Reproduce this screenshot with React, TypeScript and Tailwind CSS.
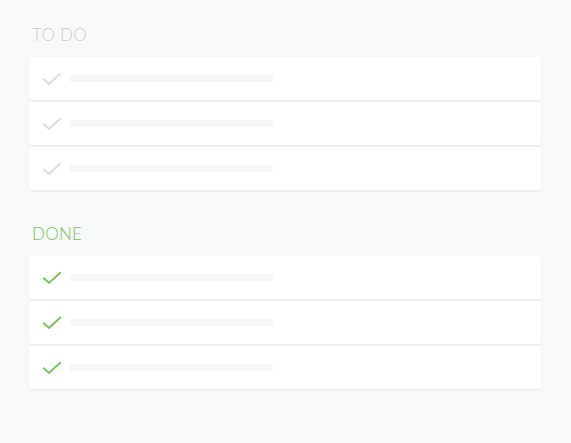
import React from "react";

type Section = {
  title: string;
  done: boolean;
};

const sections: Section[] = [
  { title: "TO DO", done: false },
  { title: "DONE", done: true },
];

const Check = ({ done }: { done: boolean }) => (
  <svg width="20" height="14" viewBox="0 0 20 14" fill="none">
    <path
      d="M2 7.5L7 12L18 2"
      stroke={done ? "#78c257" : "#dcdcdc"}
      strokeWidth="2"
      strokeLinecap="square"
    />
  </svg>
);

const TaskRow = ({ done }: { done: boolean }) => (
  <div className="flex h-[43px] items-center rounded-[3px] bg-white pl-[13px] shadow-[0_1px_2px_rgba(0,0,0,0.08)]">
    <div className="mr-[8px] flex w-[20px] shrink-0 justify-center">
      <Check done={done} />
    </div>
    <div className="h-[7px] w-[203px] rounded-[1px] bg-[#f5f6f6]" />
  </div>
);

export default function App() {
  return (
    <div className="min-h-[443px] bg-[#f7f8f9] px-[29px] pt-[25px] font-['Lato',sans-serif]">
      <div className="flex w-[512px] flex-col gap-[34px]">
        {sections.map((s) => (
          <section key={s.title}>
            <h2
              className={
                s.done
                  ? "pl-[3px] text-[17px] font-light leading-[20px] tracking-[0.3px] text-[#78c257]"
                  : "pl-[3px] text-[17px] font-light leading-[20px] tracking-[0.3px] text-[#c9c9c9]"
              }
            >
              {s.title}
            </h2>
            <div className="mt-[12px] flex flex-col gap-[2px]">
              <TaskRow done={s.done} />
              <TaskRow done={s.done} />
              <TaskRow done={s.done} />
            </div>
          </section>
        ))}
      </div>
    </div>
  );
}
